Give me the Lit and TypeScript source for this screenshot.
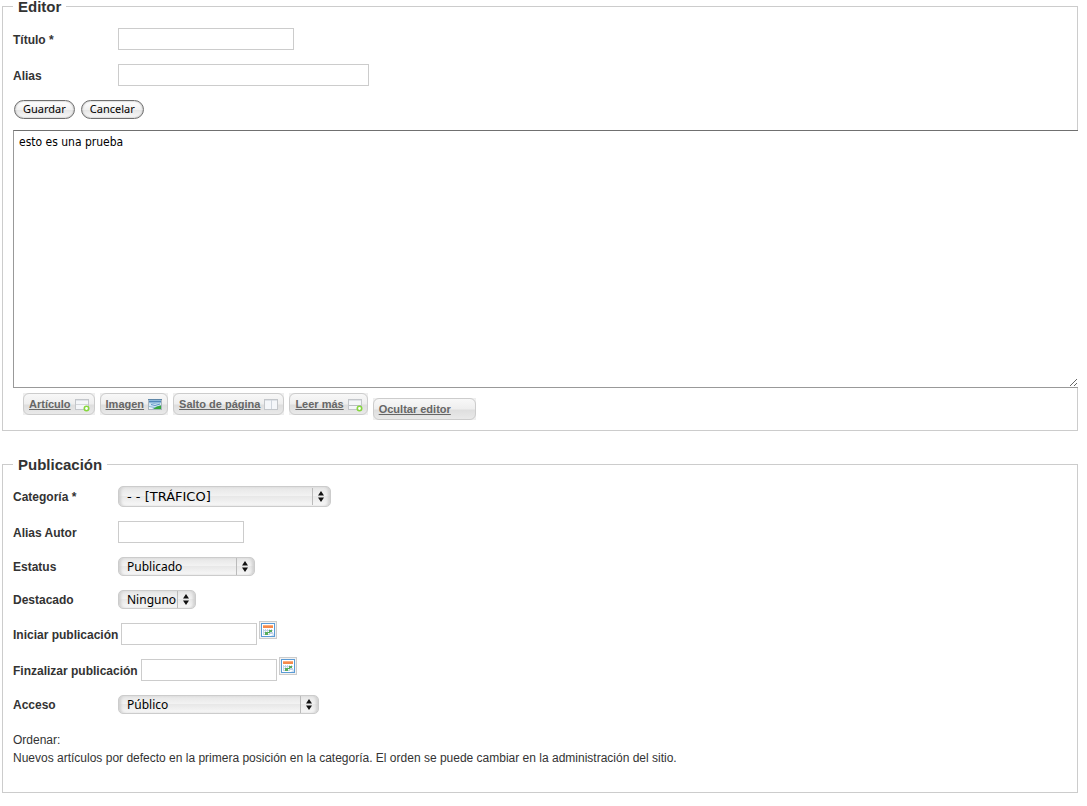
import { LitElement, html, css, svg, nothing } from "lit";
import { customElement, property } from "lit/decorators.js";

const pageIcon = svg`
  <rect x="0.5" y="2.5" width="13" height="10" fill="#f4f6f9" stroke="#c3c6ca"/>
  <path d="M1 3.5h12" stroke="#dfe3e8"/>`;

const plusBadge = svg`
  <circle cx="11.5" cy="11.5" r="2.2" fill="#fff" stroke="#86d73f" stroke-width="1.6"/>`;

const toolIcons: Record<string, unknown> = {
  article: svg`${pageIcon}<path d="M1 7.5h12" stroke="#d3d6da"/>${plusBadge}`,
  image: svg`
    <rect x="0.5" y="2.5" width="13" height="10" fill="#8db8da" stroke="#a9b4bd"/>
    <path d="M0 2.5h14" stroke="#5f87a8"/>
    <path d="M1 4.5h12" stroke="#4f86b8"/>
    <path d="M1 6l5 1 7-1v2l-6 2-6-1z" fill="#d4e8f6"/>
    <path d="M3 7.5l4 1 5-1.5" stroke="#5a93c4" fill="none"/>
    <path d="M5 12l4-2.5 4-1V12z" fill="#35a83a"/>
    <path d="M1 10l5 1-2 1H1z" fill="#eef5fa"/>`,
  pagebreak: svg`${pageIcon}<path d="M7.5 3v9" stroke="#cfd5dd"/>`,
  readmore: svg`${pageIcon}<path d="M1 8.5h12" stroke="#b9bdc2"/>${plusBadge}`,
};

@customElement("tool-link")
class ToolLink extends LitElement {
  @property() label = "";
  @property() icon = "";

  static styles = css`
    :host {
      display: block;
      background: #eeeeee;
    }
    a {
      display: flex;
      align-items: center;
      gap: 4px;
      box-sizing: border-box;
      height: 22px;
      padding: 0 4px 0 5px;
      border: 1px solid #cccccc;
      border-radius: 6px;
      background: linear-gradient(#f8f8f8, #eeeeee 50%, #dedede 55%, #e9e9e9);
      color: #666666;
      font: bold 11px/20px "Liberation Sans", Arial, sans-serif;
      text-decoration: underline;
      white-space: nowrap;
    }
    a.plain {
      padding-right: 24px;
    }
    svg {
      display: block;
      width: 15px;
      height: 15px;
    }
  `;

  render() {
    const art = toolIcons[this.icon];
    return html`<a href="#" class=${art ? "" : "plain"}
      ><span>${this.label}</span>${art
        ? html`<svg viewBox="0 0 15 15" aria-hidden="true">${art}</svg>`
        : nothing}</a
    >`;
  }
}

@customElement("app-root")
class AppRoot extends LitElement {
  static styles = css`
    :host {
      display: block;
      padding: 0 9px 0 2px;
      background: #ffffff;
      color: #333333;
      font: 12px/18px "Liberation Sans", Arial, sans-serif;
    }
    fieldset {
      min-width: 0;
      margin: 0;
      padding: 15px 10px 0;
      border: 1px solid #cccccc;
    }
    .publish {
      margin-top: 27px;
      padding-bottom: 25px;
    }
    legend {
      padding: 0 5px;
      font-size: 15px;
      line-height: 13px;
      font-weight: bold;
    }
    .rows {
      display: flex;
      flex-direction: column;
      gap: 14px;
    }
    .row {
      display: flex;
      align-items: center;
      gap: 3px;
    }
    label {
      min-width: 102px;
      font-weight: bold;
    }
    .entry label {
      padding-top: 2px;
    }
    input {
      box-sizing: border-box;
      height: 22px;
      padding: 1px 4px;
      border: 1px solid #cccccc;
      background: #ffffff;
      font: 12px "DejaVu Sans Condensed", sans-serif;
    }
    .w-title { width: 176px; }
    .w-alias { width: 251px; }
    .w-author { width: 126px; }
    .w-date { width: 136px; }
    .actions {
      display: flex;
      gap: 6px;
      padding: 14px 1px 0;
    }
    .actions button {
      height: 19px;
      padding: 0 8px 2px;
      border: 1px solid #6f6f6f;
      border-radius: 10px;
      background: linear-gradient(#ffffff, #f1f1f1 50%, #e6e6e6 55%, #fafafa);
      box-shadow: inset 0 0 2px #999999;
      color: #000000;
      font: 11px/15px "Noto Sans", sans-serif;
    }
    textarea {
      display: block;
      box-sizing: border-box;
      width: calc(100% + 11px);
      height: 258px;
      margin: 11px -11px 0 0;
      padding: 3px 5px;
      border: 1px solid #999999;
      border-top-color: #707070;
      border-right: 0;
      background: #ffffff;
      color: #000000;
      font: 12px/16px "DejaVu Sans Condensed", sans-serif;
      position: relative;
    }
    .tools {
      display: flex;
      align-items: flex-start;
      gap: 5px;
      padding: 5px 10px 10px;
    }
    .tools .low {
      margin-top: 5px;
    }
    .pick {
      display: grid;
      height: 19px;
    }
    .pick > * {
      grid-area: 1 / 1;
    }
    .pick select {
      appearance: none;
      box-sizing: border-box;
      width: 100%;
      height: 100%;
      padding: 0 19px 0 8px;
      border: 1px solid #cccccc;
      border-radius: 5px;
      background: linear-gradient(#e6e6e6, #f2f2f2 45%, #e8e8e8 50%, #f8f8f8);
      box-shadow: inset 3px 0 3px -1px #d0d0d0, inset -3px 0 3px -1px #d0d0d0;
      color: #000000;
      font: 12px/16px "Noto Sans", sans-serif;
    }
    .pick.tall {
      height: 21px;
    }
    .pick.tall select {
      font: 13px/18px "DejaVu Sans", sans-serif;
    }
    .pick svg {
      justify-self: end;
      align-self: center;
      width: 19px;
      height: 17px;
      pointer-events: none;
    }
    .w-category { width: 213px; }
    .w-status { width: 137px; }
    .w-featured { width: 78px; }
    .w-access { width: 201px; }
    .date {
      display: flex;
      align-items: flex-start;
      gap: 2px;
    }
    .date button {
      display: block;
      width: 18px;
      height: 18px;
      margin-top: -2px;
      padding: 0;
      border: 1px solid #cccccc;
      background: #f2f2f2;
    }
    .date svg {
      display: block;
      width: 16px;
      height: 16px;
    }
    .note {
      margin: 17px 0 0;
    }
  `;

  private picker(id: string, text: string, width: string) {
    return html`<div class="pick ${width} ${id === "category" ? "tall" : ""}">
      <select id=${id}>
        <option>${text}</option>
      </select>
      <svg viewBox="0 0 19 17" aria-hidden="true">
        <path d="M0.5 0v17" stroke="#bbbbbb" />
        <path d="M9 3l3 4.5h-6zM9 14l3-4.5h-6z" fill="#111111" />
      </svg>
    </div>`;
  }

  private dateField(id: string, label: string) {
    return html`<div class="row entry">
      <label for=${id}>${label}</label>
      <div class="date">
        <input id=${id} class="w-date" type="text" />
        <button type="button" aria-label="Calendario">
          <svg viewBox="0 0 16 16" aria-hidden="true">
            <rect x="1.5" y="1.5" width="13" height="13" fill="#ffffff" stroke="#5b9bd5" />
            <g shape-rendering="crispEdges">
              <rect x="3" y="3" width="10" height="3" fill="#f58a4b" />
              <rect x="3" y="3" width="10" height="1" fill="#fbac7c" />
              <rect x="3" y="7" width="10" height="6" fill="#c3d3e6" />
              <path d="M4 7h1v1h-1zM6 7h1v1h-1zM8 7h1v1h-1zM10 7h1v1h-1zM12 7h1v1h-1zM4 9h1v1h-1zM6 9h1v1h-1zM8 9h1v1h-1zM12 9h1v1h-1zM4 11h1v1h-1zM8 11h1v1h-1z" fill="#ffffff" />
              <path d="M9 8h3v2H9zM5 10h3v3H5zM8 10h2v1H8z" fill="#58ad5c" />
              <path d="M10 12h3v1h-3z" fill="#ffffff" />
            </g>
            <path d="M11 14l3-3v3z" fill="#cfe0f2" />
          </svg>
        </button>
      </div>
    </div>`;
  }

  render() {
    return html`
      <fieldset>
        <legend>Editor</legend>
        <div class="rows">
          <div class="row entry">
            <label for="title">Título *</label>
            <input id="title" class="w-title" type="text" />
          </div>
          <div class="row entry">
            <label for="alias">Alias</label>
            <input id="alias" class="w-alias" type="text" />
          </div>
        </div>
        <div class="actions">
          <button type="button">Guardar</button>
          <button type="button">Cancelar</button>
        </div>
        <textarea aria-label="Texto" .value=${"esto es una prueba"}></textarea>
        <div class="tools">
          <tool-link label="Artículo" icon="article"></tool-link>
          <tool-link label="Imagen" icon="image"></tool-link>
          <tool-link label="Salto de página" icon="pagebreak"></tool-link>
          <tool-link label="Leer más" icon="readmore"></tool-link>
          <tool-link class="low" label="Ocultar editor"></tool-link>
        </div>
      </fieldset>

      <fieldset class="publish">
        <legend>Publicación</legend>
        <div class="rows">
          <div class="row">
            <label for="category">Categoría *</label>
            ${this.picker("category", "- - [TRÁFICO]", "w-category")}
          </div>
          <div class="row entry">
            <label for="author">Alias Autor</label>
            <input id="author" class="w-author" type="text" />
          </div>
          <div class="row">
            <label for="status">Estatus</label>
            ${this.picker("status", "Publicado", "w-status")}
          </div>
          <div class="row">
            <label for="featured">Destacado</label>
            ${this.picker("featured", "Ninguno", "w-featured")}
          </div>
          ${this.dateField("start", "Iniciar publicación")}
          ${this.dateField("end", "Finzalizar publicación")}
          <div class="row">
            <label for="access">Acceso</label>
            ${this.picker("access", "Público", "w-access")}
          </div>
        </div>
        <p class="note">
          Ordenar:<br />Nuevos artículos por defecto en la primera posición en la categoría. El
          orden se puede cambiar en la administración del sitio.
        </p>
      </fieldset>
    `;
  }
}
